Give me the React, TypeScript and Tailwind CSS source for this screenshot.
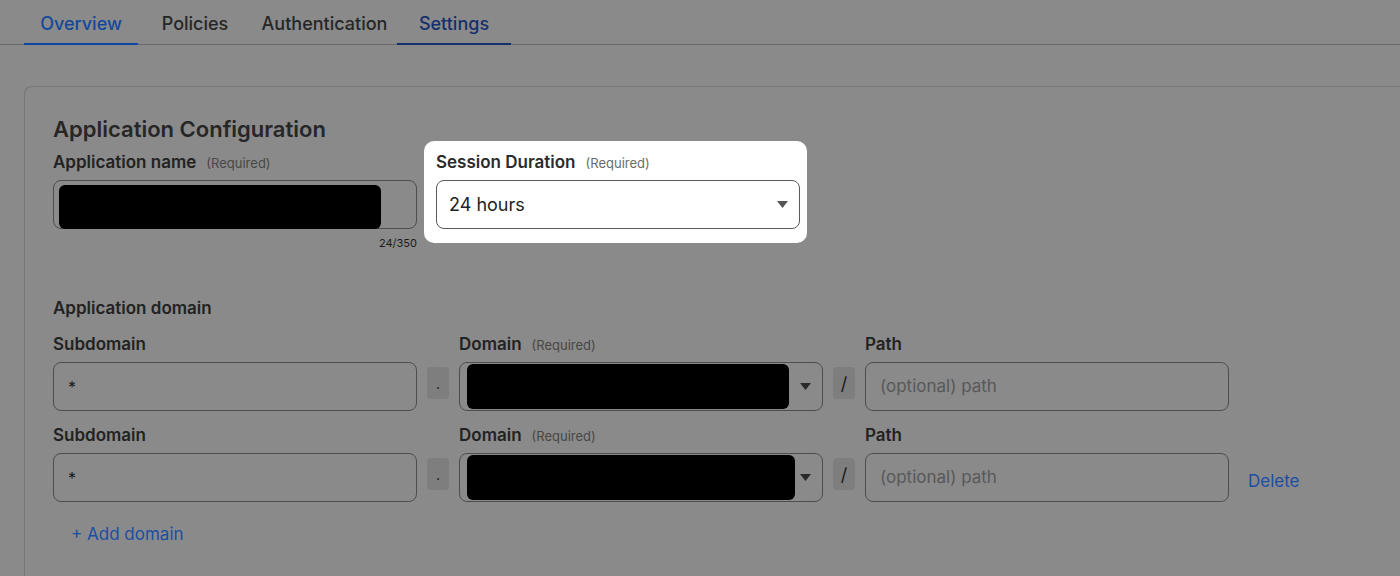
import type { ReactNode } from 'react'

const tabs = [
  { label: 'Overview', width: 'w-[114px]', text: 'text-[#14489b]', line: 'border-[#0d47a1]' },
  { label: 'Policies', width: 'w-[114px]', text: 'text-[#262626]', line: 'border-transparent' },
  { label: 'Authentication', width: 'w-[145px]', text: 'text-[#262626]', line: 'border-transparent' },
  { label: 'Settings', width: 'w-[114px]', text: 'text-[#14306c]', line: 'border-[#12306b]' },
]

function Caret({ className = '' }: { className?: string }) {
  return (
    <svg width="11" height="7" viewBox="0 0 11 7" className={className}>
      <path d="M0 0h11L5.5 7z" fill="currentColor" />
    </svg>
  )
}

function Label({ children, required }: { children: ReactNode; required?: boolean }) {
  return (
    <div className="flex items-baseline h-5 leading-5 pt-px">
      <span className="text-[17px] font-semibold text-[#222]">{children}</span>
      {required && <span className="ml-[10px] text-[13px] text-[#474747]">(Required)</span>}
    </div>
  )
}

function DomainRow({ redactWidth, showDelete }: { redactWidth: string; showDelete?: boolean }) {
  return (
    <div className="grid grid-cols-[364px_22px_364px_22px_364px_auto] gap-x-[10px] gap-y-[9px]">
      <Label>Subdomain</Label>
      <div />
      <Label required>Domain</Label>
      <div />
      <Label>Path</Label>
      <div />

      <div className="h-[49px] rounded-lg border border-[#4e4e4e] flex items-center pl-[14px] text-[16px] text-[#1a1a1a]">
        *
      </div>
      <div className="mt-[5px] h-[32px] rounded-[4px] bg-[#7e7e7e] flex items-center justify-center text-[#111] text-[14px]">
        .
      </div>
      <div className="h-[49px] rounded-lg border border-[#4e4e4e] flex items-center pl-[7px] pr-[11px]">
        <div className={`h-[45px] ${redactWidth} rounded-md bg-black`} />
        <Caret className="ml-auto text-[#2a2a2a]" />
      </div>
      <div className="mt-[5px] h-[32px] rounded-[4px] bg-[#7e7e7e] flex items-center justify-center text-[#1a1a1a] text-[18px]">
        /
      </div>
      <div className="h-[49px] rounded-lg border border-[#4e4e4e] flex items-center pl-[14px] text-[17px] text-[#585858]">
        (optional) path
      </div>
      <div className="flex items-center pt-2 pl-[9px]">
        {showDelete && <span className="text-[17px] text-[#1a4ea3]">Delete</span>}
      </div>
    </div>
  )
}

export default function App() {
  return (
    <div className="h-[576px] overflow-hidden bg-[#8a8a8a] font-['Inter','Liberation_Sans',sans-serif]">
      <nav className="flex pl-6 border-b border-[#6a6a6a]">
        {tabs.map((tab) => (
          <div
            key={tab.label}
            className={`${tab.width} h-[45px] -mb-px pt-[3px] flex items-center justify-center border-b-2 ${tab.line} ${tab.text} text-[18px] font-medium`}
          >
            {tab.label}
          </div>
        ))}
      </nav>

      <div className="pl-6 pt-[41px]">
        <section className="-mr-6 h-[520px] rounded-tl-lg border-l border-t border-[#777] pl-7 pt-7">
          <h2 className="text-[22px] leading-7 font-semibold text-[#262626]">
            Application Configuration
          </h2>

          <div className="mt-2 flex gap-[19px] items-start">
            <div className="w-[364px]">
              <Label required>Application name</Label>
              <div className="mt-[9px] h-[49px] rounded-lg border border-[#4e4e4e] pl-[5px] pt-[4px]">
                <div className="h-[44px] w-[322px] rounded-md bg-black" />
              </div>
              <div className="mt-[7px] text-right text-[11px] leading-[14px] text-[#1a1a1a]">24/350</div>
            </div>

            <div className="-ml-3 -mt-[10px] w-[383px] rounded-[10px] bg-white pl-3 pr-[7px] pt-[10px] pb-[14px]">
              <div className="flex items-baseline h-5 leading-5 pt-px">
                <span className="text-[17px] font-semibold text-[#2b2b2b]">Session Duration</span>
                <span className="ml-[10px] text-[13px] text-[#6b6b6b]">(Required)</span>
              </div>
              <div className="mt-[9px] h-[49px] rounded-lg border border-[#5a5a5a] flex items-center pl-3 pr-[11px]">
                <span className="text-[18px] text-[#222]">24 hours</span>
                <Caret className="ml-auto text-[#555]" />
              </div>
            </div>
          </div>

          <h3 className="mt-[47px] pt-px text-[17px] leading-5 font-semibold text-[#222]">
            Application domain
          </h3>

          <div className="mt-[15px]">
            <DomainRow redactWidth="w-[322px]" />
          </div>
          <div className="mt-[13px]">
            <DomainRow redactWidth="w-[328px]" showDelete />
          </div>

          <div className="mt-[22px] ml-[18px] text-[17px] leading-5 text-[#1a4ea3]">+ Add domain</div>
        </section>
      </div>
    </div>
  )
}
